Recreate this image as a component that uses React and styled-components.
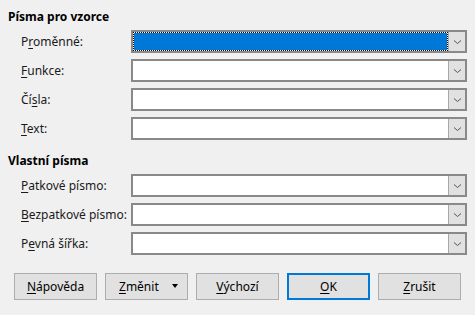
import React from "react";
import styled, { createGlobalStyle } from "styled-components";

const GlobalStyle = createGlobalStyle`
  html, body {
    margin: 0;
    padding: 0;
    background: #f0f0f0;
  }
  body {
    font-family: "Noto Sans", "Open Sans", sans-serif;
    font-size: 12px;
    color: #000;
  }
`;

const Dialog = styled.div`
  width: 475px;
  height: 315px;
  box-sizing: border-box;
  padding: 9px 8px 0 8px;
  display: flex;
  flex-direction: column;
`;

const Heading = styled.div`
  font-weight: 700;
  height: 16px;
  line-height: 16px;
  margin-top: ${(p) => p.$top || 0}px;
`;

const Rows = styled.div`
  display: flex;
  flex-direction: column;
  gap: 6px;
  margin-top: 5px;
  padding-left: 13px;
`;

const Row = styled.div`
  display: grid;
  grid-template-columns: 110px 336px;
  align-items: center;
  height: 23px;
`;

const Label = styled.label`
  white-space: nowrap;
  color: #1a1a1a;
  u {
    text-decoration: underline;
    text-underline-offset: 2px;
  }
`;

const Combo = styled.div`
  height: 23px;
  box-sizing: border-box;
  border: 2px solid #898989;
  background: #fff;
  display: flex;
`;

const ComboText = styled.div`
  flex: 1;
  background: ${(p) => (p.$focused ? "#0078d7" : "#fff")};
  border: ${(p) => (p.$focused ? "1px dotted #000" : "none")};
  background-clip: padding-box;
`;

const DropButton = styled.div`
  width: 17px;
  box-sizing: border-box;
  border-left: 1px solid #a8a8a8;
  background: #e1e1e1;
  display: flex;
  align-items: center;
  justify-content: center;
`;

const Buttons = styled.div`
  display: flex;
  gap: 8px;
  margin-top: 18px;
  padding-left: 6px;
`;

const Button = styled.div`
  width: 83px;
  height: 27px;
  box-sizing: border-box;
  background: #e1e1e1;
  border: ${(p) => (p.$default ? "2px solid #0078d7" : "1px solid #adadad")};
  display: flex;
  align-items: center;
  justify-content: ${(p) => (p.$menu ? "flex-start" : "center")};
  padding-left: ${(p) => (p.$menu ? "13px" : "0")};
  position: relative;
  u {
    text-decoration: underline;
    text-underline-offset: 2px;
  }
`;

const MenuArrow = styled.span`
  position: absolute;
  right: 9px;
  top: 10px;
  width: 0;
  height: 0;
  border-left: 3.5px solid transparent;
  border-right: 3.5px solid transparent;
  border-top: 4px solid #000;
`;

const Chevron = () => (
  <svg width="9" height="6" viewBox="0 0 9 6">
    <path d="M1 1.5 L4.5 4.5 L8 1.5" fill="none" stroke="#555" strokeWidth="1" />
  </svg>
);

const FontRow = ({ label, focused }) => (
  <Row>
    <Label>{label}</Label>
    <Combo>
      <ComboText $focused={focused} />
      <DropButton>
        <Chevron />
      </DropButton>
    </Combo>
  </Row>
);

export default function App() {
  return (
    <>
      <GlobalStyle />
      <Dialog>
        <Heading>Písma pro vzorce</Heading>
        <Rows>
          <FontRow focused label={<>P<u>r</u>oměnné:</>} />
          <FontRow label={<><u>F</u>unkce:</>} />
          <FontRow label={<>Čí<u>s</u>la:</>} />
          <FontRow label={<><u>T</u>ext:</>} />
        </Rows>
        <Heading $top={13}>Vlastní písma</Heading>
        <Rows>
          <FontRow label={<><u>P</u>atkové písmo:</>} />
          <FontRow label={<><u>B</u>ezpatkové písmo:</>} />
          <FontRow label={<>P<u>e</u>vná šířka:</>} />
        </Rows>
        <Buttons>
          <Button><span><u>N</u>ápověda</span></Button>
          <Button $menu>
            <span><u>Z</u>měnit</span>
            <MenuArrow />
          </Button>
          <Button><span><u>V</u>ýchozí</span></Button>
          <Button $default><span><u>O</u>K</span></Button>
          <Button><span><u>Z</u>rušit</span></Button>
        </Buttons>
      </Dialog>
    </>
  );
}
